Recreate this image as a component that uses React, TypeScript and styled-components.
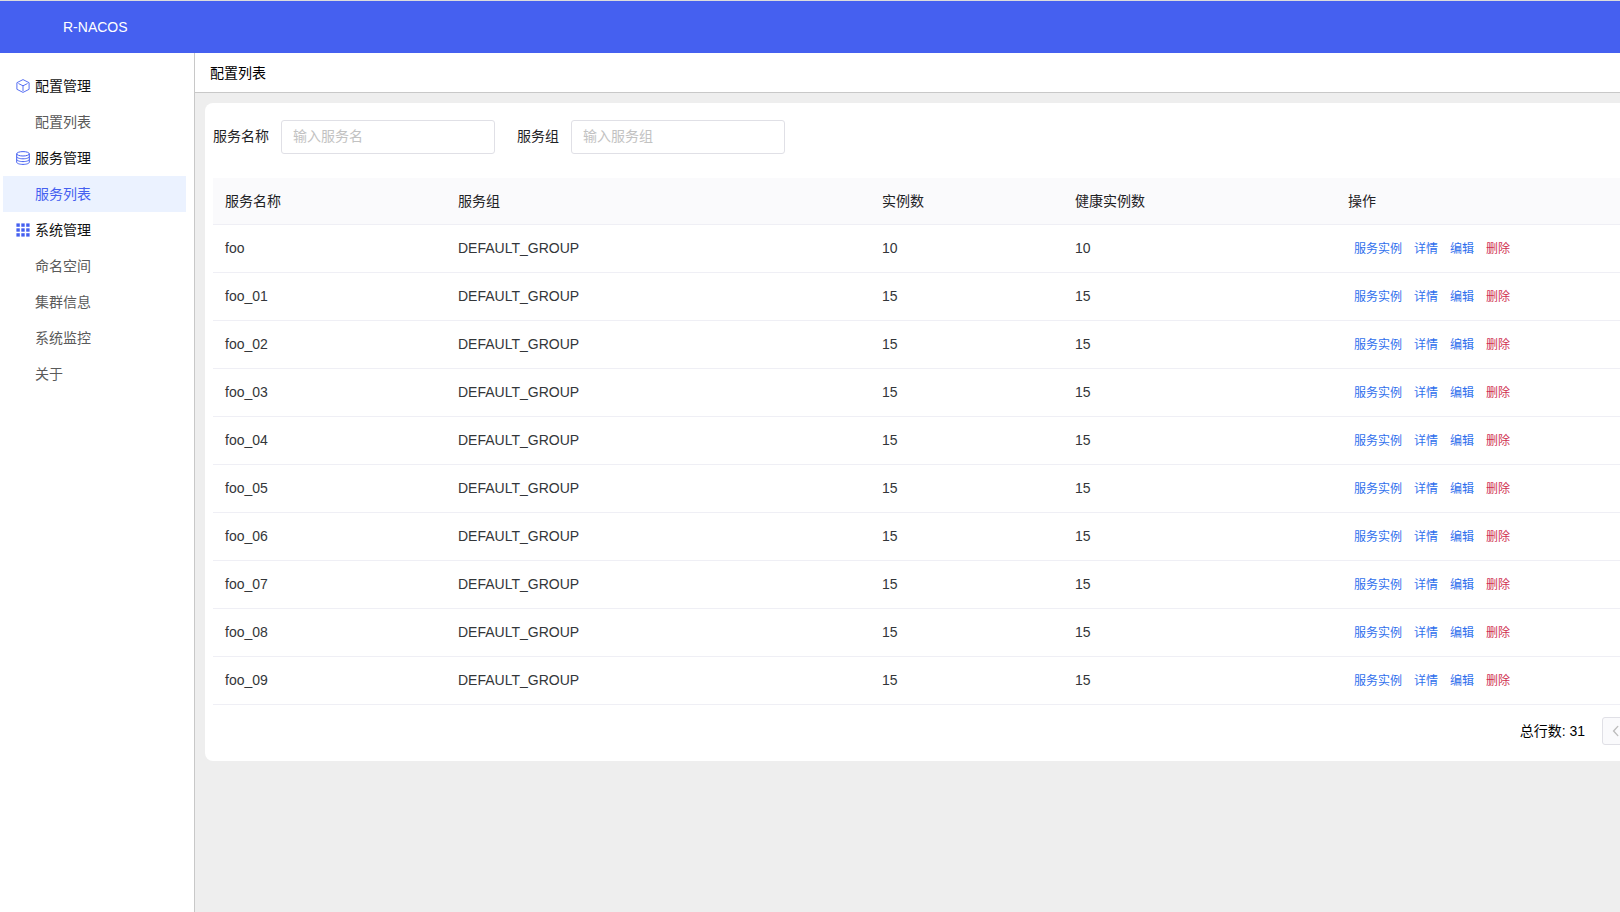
import React from 'react';
import styled, { createGlobalStyle } from 'styled-components';

const GlobalStyle = createGlobalStyle`
  * { box-sizing: border-box; }
  body {
    margin: 0;
    overflow: hidden;
    background: #fff;
    color: #000;
    font: 14px/22px "Liberation Sans", "Noto Sans CJK SC", sans-serif;
  }
  button, input { font: inherit; }
`;

const Page = styled.div`
  display: flex;
  flex-direction: column;
  height: 100vh;
`;

const TopBar = styled.header`
  flex: none;
  display: flex;
  align-items: center;
  height: 53px;
  padding: 0 63px;
  border-top: 1px solid #dcdcdc;
  background: #4560f0;
  color: #fff;
`;

const Brand = styled.h1`
  margin: 0;
  font-size: 14px;
  font-weight: 400;
`;

const Body = styled.div`
  flex: 1;
  display: flex;
  min-height: 0;
`;

const Sidebar = styled.nav`
  flex: none;
  width: 195px;
  padding: 15px 8px 15px 3px;
  border-right: 1px solid #c8c8c8;
`;

const MenuList = styled.ul`
  margin: 0;
  padding: 0;
  list-style: none;
`;

const MenuGroup = styled.div`
  display: flex;
  align-items: center;
  gap: 5px;
  height: 36px;
  padding-left: 13px;
  color: #111;

  svg { width: 14px; height: 14px; color: #4560f0; }
`;

const MenuLink = styled.a<{ $active?: boolean }>`
  display: flex;
  align-items: center;
  height: 36px;
  padding-left: 32px;
  background: ${(p) => (p.$active ? '#ebf2ff' : 'transparent')};
  color: ${(p) => (p.$active ? '#4560f0' : '#5a5a5a')};
  text-decoration: none;
`;

const Main = styled.main`
  flex: 1;
  display: flex;
  flex-direction: column;
  min-width: 0;
  overflow: hidden;
  background: #eee;
`;

const PageTitle = styled.h2`
  flex: none;
  display: flex;
  align-items: center;
  height: 40px;
  margin: 0;
  padding: 0 15px;
  border-bottom: 1px solid #c8c8c8;
  background: #fff;
  font-size: 14px;
  font-weight: 400;
`;

const Card = styled.section`
  margin: 10px -18px 10px 10px;
  padding: 17px 8px 16px;
  border-radius: 8px;
  background: #fff;
`;

const Filters = styled.form`
  display: flex;
  gap: 22px;
  margin-bottom: 24px;
`;

const Field = styled.label`
  display: flex;
  align-items: center;
  gap: 12px;
  color: #1f2225;
`;

const FieldName = styled.span`
  padding-bottom: 2px;
`;

const TextInput = styled.input`
  width: 214px;
  height: 34px;
  padding: 0 11px 2px;
  border: 1px solid #e0e0e6;
  border-radius: 3px;
  background: #fff;
  outline: none;

  &::placeholder { color: #c2c2c2; opacity: 1; }
`;

const Table = styled.table`
  width: 100%;
  table-layout: fixed;
  border-collapse: separate;
  border-spacing: 0;
`;

const HeadCell = styled.th`
  height: 47px;
  padding: 0 12px;
  border-bottom: 1px solid #efeff5;
  background: #fafafc;
  color: #1f2225;
  font-weight: 400;
  text-align: left;
`;

const Cell = styled.td`
  height: 48px;
  padding: 0 12px 2px;
  border-bottom: 1px solid #efeff5;
  color: #333639;
`;

const Actions = styled.div`
  display: flex;
  gap: 12px;
  padding: 3px 6px 0;
`;

const ActionButton = styled.button<{ $danger?: boolean }>`
  padding: 0;
  border: 0;
  background: none;
  color: ${(p) => (p.$danger ? '#d03050' : '#2f6fed')};
  font-size: 12px;
  cursor: pointer;
`;

const Pager = styled.footer`
  display: flex;
  align-items: center;
  justify-content: flex-end;
  gap: 17px;
  margin-top: 12px;
`;

const PagerButton = styled.button`
  display: flex;
  align-items: center;
  justify-content: center;
  width: 28px;
  height: 28px;
  padding: 0;
  border: 1px solid #e0e0e6;
  border-radius: 3px;
  background: #fafafc;
  color: #bdbdbd;
`;

const CubeIcon = () => (
  <svg viewBox="0 0 14 14" fill="none" stroke="currentColor" strokeLinejoin="round" aria-hidden="true">
    <path d="M7 .6 13.1 3.7v6.6L7 13.4.9 10.3V3.7z" strokeWidth=".9" />
    <path d="M2.8 4.7 7 6.8l4.2-2.1M7 6.8v4.9" strokeLinecap="round" strokeWidth=".9" />
  </svg>
);

const DatabaseIcon = () => (
  <svg viewBox="0 0 14 14" fill="none" stroke="currentColor" aria-hidden="true">
    <ellipse cx="7" cy="2.8" rx="6.3" ry="2.2" />
    <path d="M.7 2.8v8.4c0 1.2 2.8 2.2 6.3 2.2s6.3-1 6.3-2.2V2.8M.7 5.6c0 1.2 2.8 2.2 6.3 2.2s6.3-1 6.3-2.2M.7 8.4c0 1.2 2.8 2.2 6.3 2.2s6.3-1 6.3-2.2" />
  </svg>
);

const GridIcon = () => (
  <svg viewBox="0 0 14 14" fill="currentColor" aria-hidden="true">
    {[0.4, 5.3, 10.2].map((y) => [0.4, 5.3, 10.2].map((x) => (
      <rect key={`${x}-${y}`} x={x} y={y} width="3.4" height="3.4" />
    )))}
  </svg>
);

const ChevronLeft = () => (
  <svg width="14" height="14" viewBox="0 0 14 14" fill="none" stroke="currentColor" strokeWidth="1.4" strokeLinecap="round" aria-hidden="true">
    <path d="M8.8 2.4 4.6 7l4.2 4.6" />
  </svg>
);

const menu = [
  { title: '配置管理', icon: <CubeIcon />, items: ['配置列表'] },
  { title: '服务管理', icon: <DatabaseIcon />, items: ['服务列表'] },
  { title: '系统管理', icon: <GridIcon />, items: ['命名空间', '集群信息', '系统监控', '关于'] },
];
const activeItem = '服务列表';

const columns = [
  { title: '服务名称', width: 233 },
  { title: '服务组', width: 424 },
  { title: '实例数', width: 193 },
  { title: '健康实例数', width: 273 },
  { title: '操作', width: 294 },
];

const services = Array.from({ length: 10 }, (_, i) => ({
  name: i === 0 ? 'foo' : `foo_0${i}`,
  group: 'DEFAULT_GROUP',
  instances: i === 0 ? 10 : 15,
  healthy: i === 0 ? 10 : 15,
}));

export default function App() {
  return (
    <Page>
      <GlobalStyle />
      <TopBar><Brand>R-NACOS</Brand></TopBar>
      <Body>
        <Sidebar>
          <MenuList>
            {menu.map((group) => (
              <li key={group.title}>
                <MenuGroup>{group.icon}<span>{group.title}</span></MenuGroup>
                <MenuList>
                  {group.items.map((item) => (
                    <li key={item}>
                      <MenuLink href="#" $active={item === activeItem}>{item}</MenuLink>
                    </li>
                  ))}
                </MenuList>
              </li>
            ))}
          </MenuList>
        </Sidebar>
        <Main>
          <PageTitle>配置列表</PageTitle>
          <Card>
            <Filters>
              <Field>
                <FieldName>服务名称</FieldName>
                <TextInput type="text" placeholder="输入服务名" />
              </Field>
              <Field>
                <FieldName>服务组</FieldName>
                <TextInput type="text" placeholder="输入服务组" />
              </Field>
            </Filters>
            <Table>
              <colgroup>
                {columns.map((c) => <col key={c.title} width={c.width} />)}
              </colgroup>
              <thead>
                <tr>{columns.map((c) => <HeadCell key={c.title} scope="col">{c.title}</HeadCell>)}</tr>
              </thead>
              <tbody>
                {services.map((s) => (
                  <tr key={s.name}>
                    <Cell>{s.name}</Cell>
                    <Cell>{s.group}</Cell>
                    <Cell>{s.instances}</Cell>
                    <Cell>{s.healthy}</Cell>
                    <Cell>
                      <Actions>
                        <ActionButton type="button">服务实例</ActionButton>
                        <ActionButton type="button">详情</ActionButton>
                        <ActionButton type="button">编辑</ActionButton>
                        <ActionButton type="button" $danger>删除</ActionButton>
                      </Actions>
                    </Cell>
                  </tr>
                ))}
              </tbody>
            </Table>
            <Pager>
              <span>总行数: 31</span>
              <PagerButton type="button" aria-label="上一页" disabled><ChevronLeft /></PagerButton>
            </Pager>
          </Card>
        </Main>
      </Body>
    </Page>
  );
}
